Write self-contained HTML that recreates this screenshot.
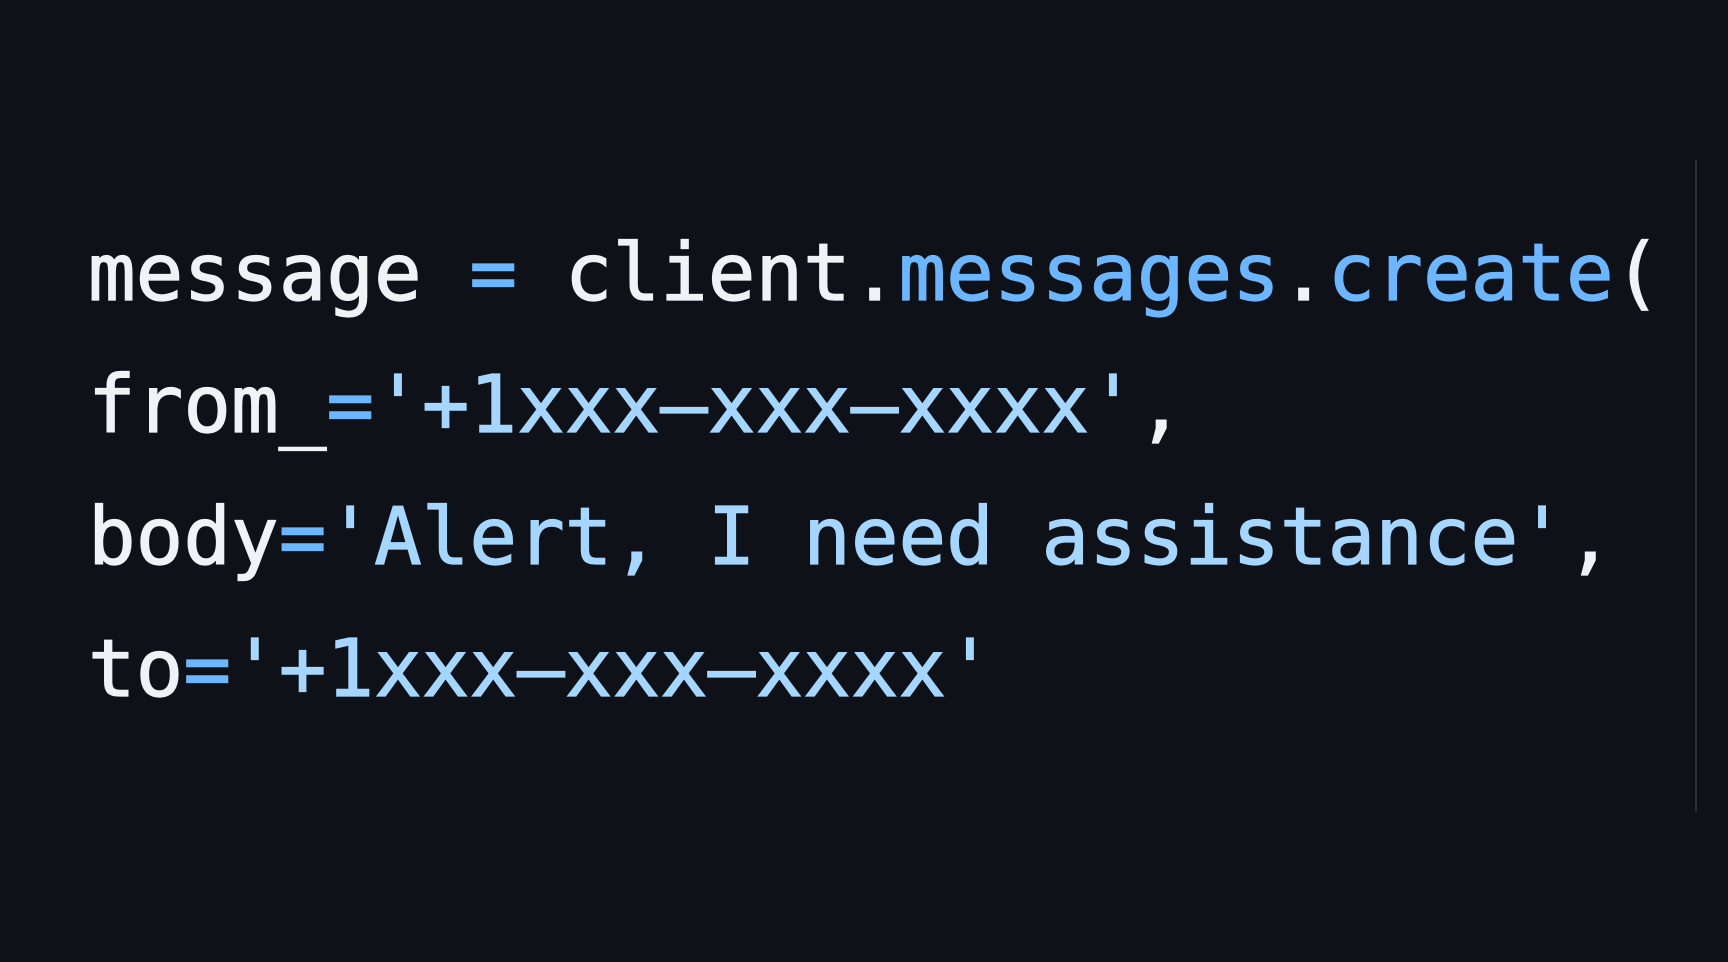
<!DOCTYPE html>
<html><head><meta charset="utf-8"><style>
html,body{margin:0;padding:0;background:#0e1117;width:1728px;height:962px;overflow:hidden}
.code{position:absolute;left:88px;top:207px;font-family:"DejaVu Sans Mono","Liberation Mono",monospace;font-size:79.2px;line-height:132px;color:#f0f3f6;white-space:pre;-webkit-text-stroke:1.2px currentColor}
.b{color:#6cb6ff}.s{color:#a5d6ff}
.bar{position:absolute;left:1695px;top:160px;width:2px;height:652px;background:#2a2f36}
</style></head><body>
<div class="code">message <span class="b">=</span> client.<span class="b">messages</span>.<span class="b">create</span>(
from_<span class="b">=</span><span class="s">'+1xxx–xxx–xxxx'</span>,
body<span class="b">=</span><span class="s">'Alert, I need assistance'</span>,
to<span class="b">=</span><span class="s">'+1xxx–xxx–xxxx'</span></div>
<div class="bar"></div>
</body></html>
